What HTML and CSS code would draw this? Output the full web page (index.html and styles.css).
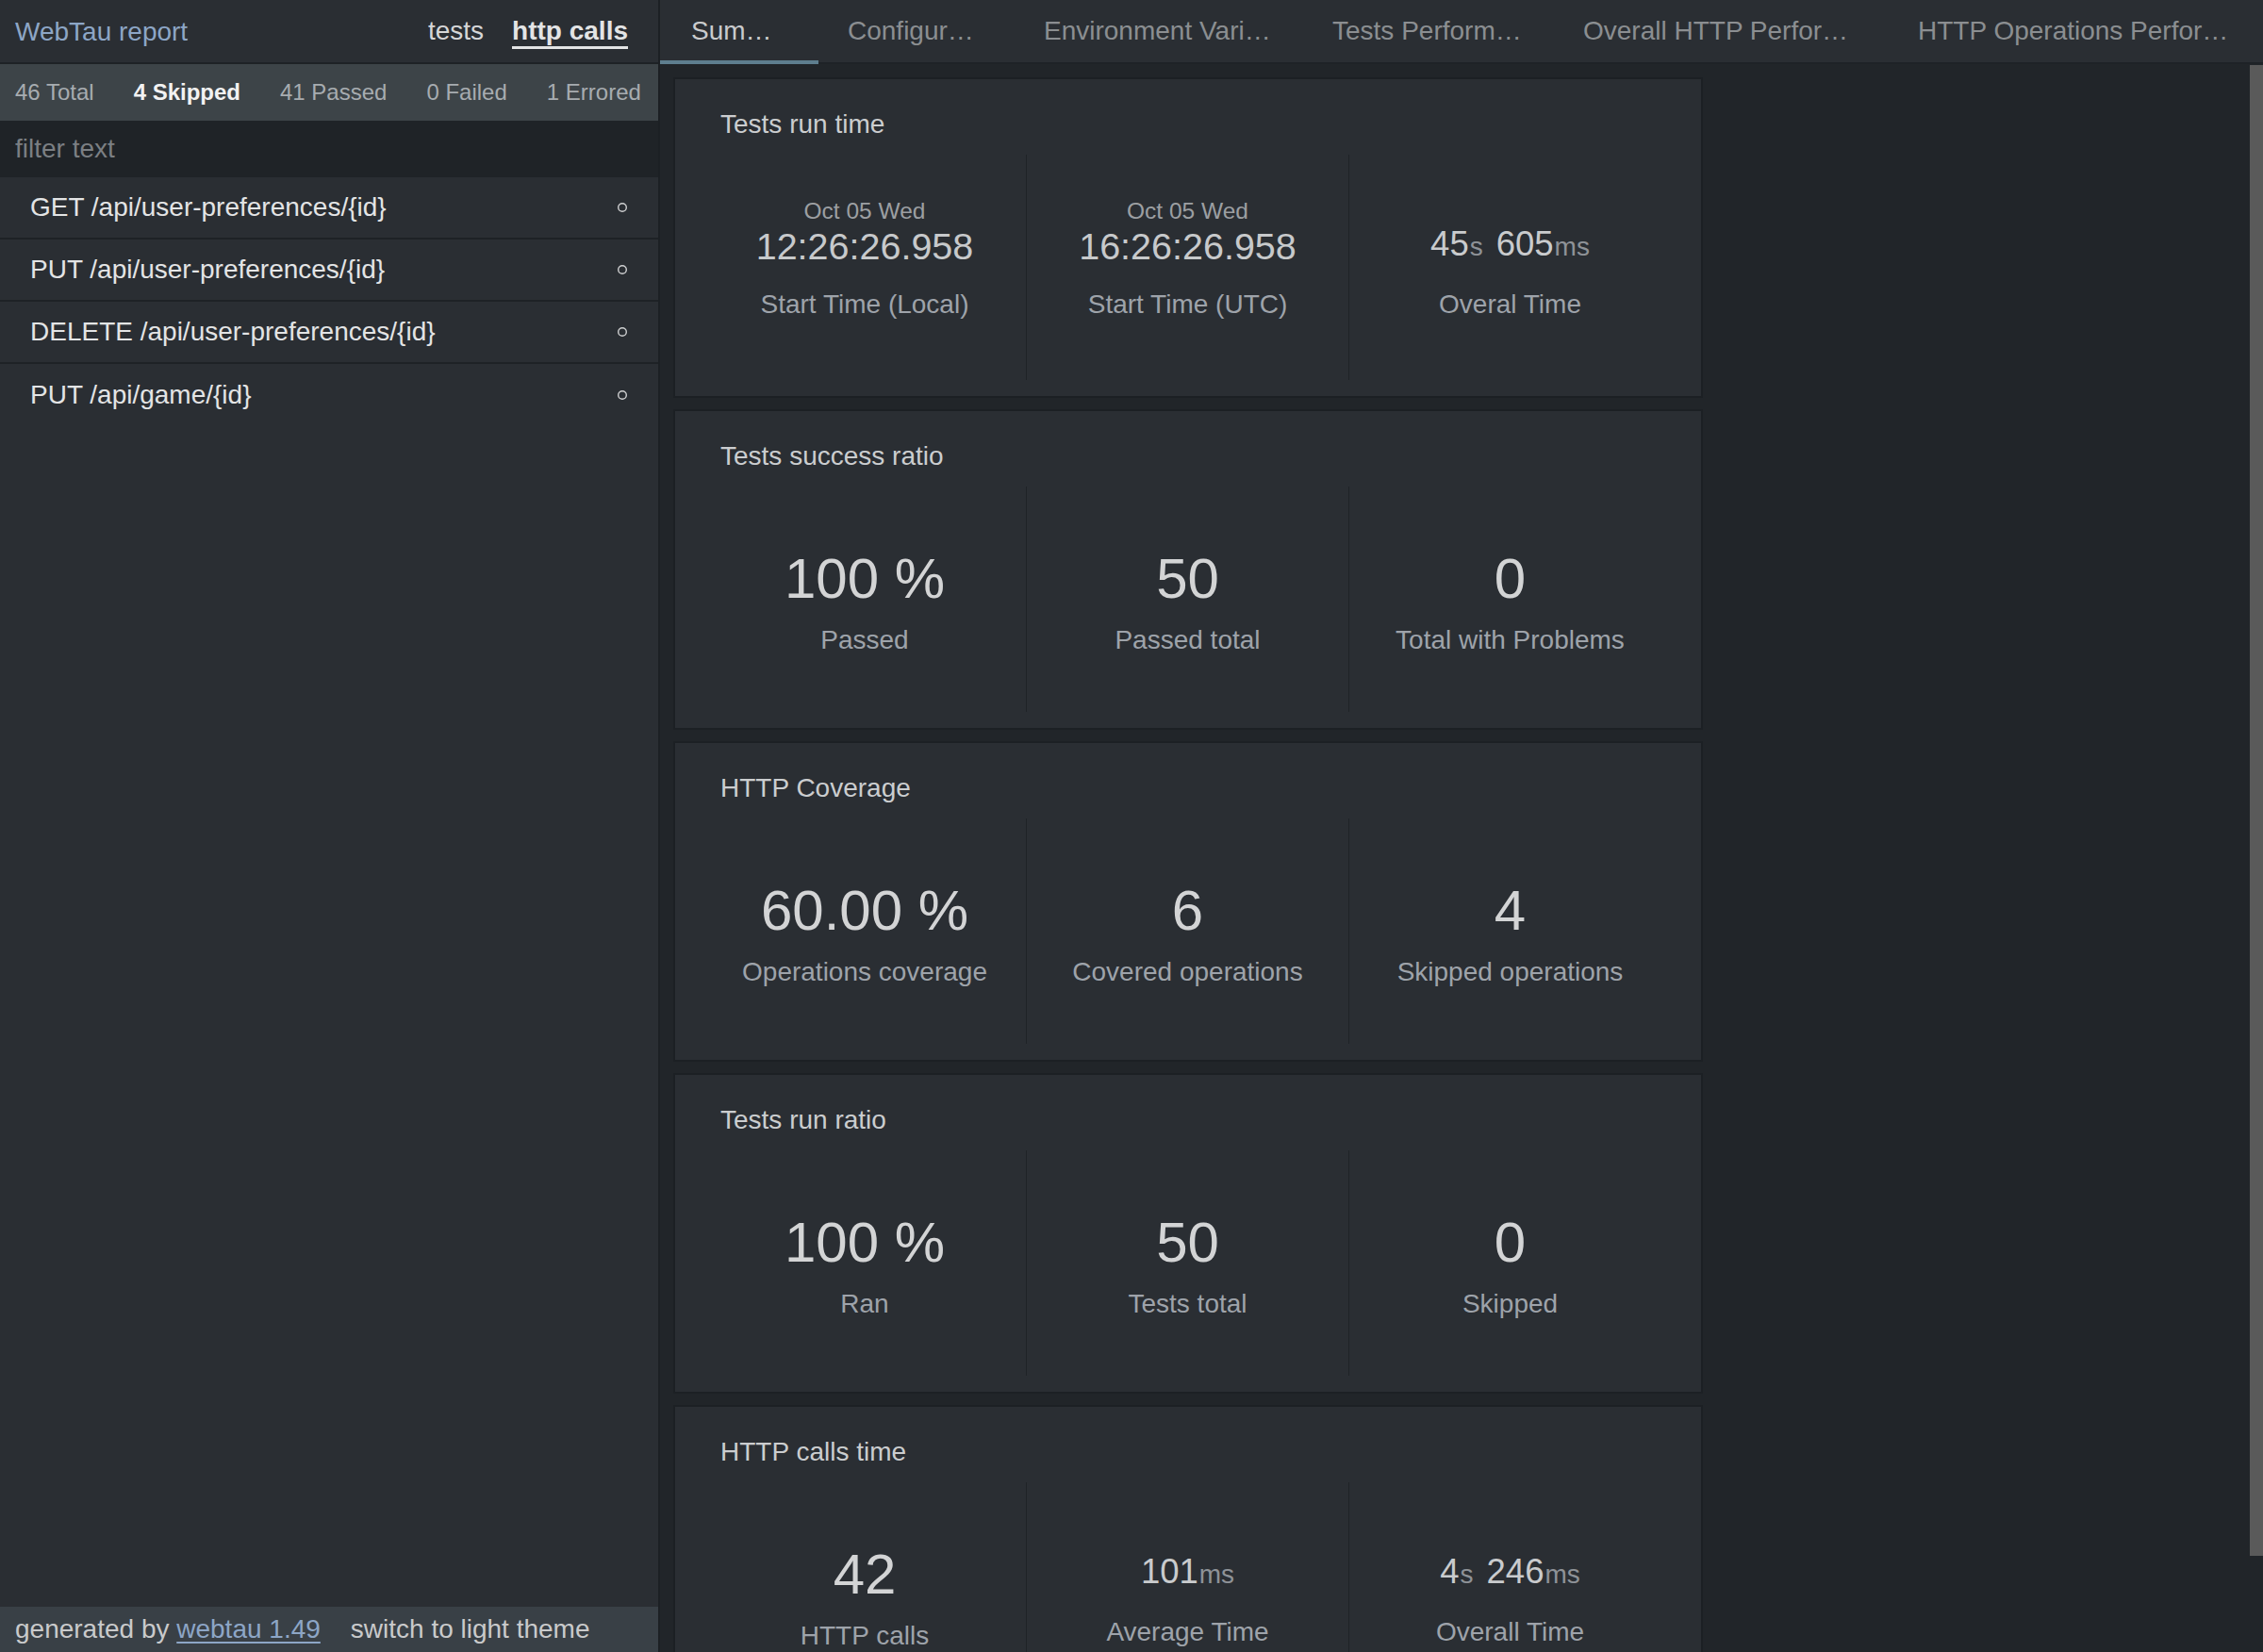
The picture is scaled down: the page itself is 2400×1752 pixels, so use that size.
FILE: index.html
```html
<!DOCTYPE html>
<html lang="en">
<head>
<meta charset="utf-8">
<title>WebTau report</title>
<link rel="stylesheet" href="styles.css">
</head>
<body>
<div class="app">
  <aside class="sidebar">
    <header class="side-header">
      <span class="brand">WebTau report</span>
      <nav class="mode-nav">
        <span class="mode">tests</span>
        <span class="mode mode-active">http calls</span>
      </nav>
    </header>
    <div class="status-bar">
      <span class="status">46 Total</span>
      <span class="status status-selected">4 Skipped</span>
      <span class="status">41 Passed</span>
      <span class="status">0 Failed</span>
      <span class="status">1 Errored</span>
    </div>
    <div class="filter">
      <input class="filter-input" type="text" placeholder="filter text">
    </div>
    <ul class="ops">
      <li class="op"><span class="op-label">GET /api/user-preferences/{id}</span><svg class="op-icon" width="12" height="12" viewBox="0 0 12 12"><circle cx="6" cy="6" r="4.3" fill="none" stroke="#cfd0d1" stroke-width="1.4"/></svg></li>
      <li class="op"><span class="op-label">PUT /api/user-preferences/{id}</span><svg class="op-icon" width="12" height="12" viewBox="0 0 12 12"><circle cx="6" cy="6" r="4.3" fill="none" stroke="#cfd0d1" stroke-width="1.4"/></svg></li>
      <li class="op"><span class="op-label">DELETE /api/user-preferences/{id}</span><svg class="op-icon" width="12" height="12" viewBox="0 0 12 12"><circle cx="6" cy="6" r="4.3" fill="none" stroke="#cfd0d1" stroke-width="1.4"/></svg></li>
      <li class="op"><span class="op-label">PUT /api/game/{id}</span><svg class="op-icon" width="12" height="12" viewBox="0 0 12 12"><circle cx="6" cy="6" r="4.3" fill="none" stroke="#cfd0d1" stroke-width="1.4"/></svg></li>
    </ul>
    <footer class="side-footer">
      <span>generated by <a class="footer-link" href="#">webtau 1.49</a></span>
      <span class="theme-switch">switch to light theme</span>
    </footer>
  </aside>

  <main class="main">
    <nav class="tabs">
      <span class="tab tab-summary tab-active">Sum…</span>
      <span class="tab tab-config">Configur…</span>
      <span class="tab tab-env">Environment Vari…</span>
      <span class="tab tab-perf">Tests Perform…</span>
      <span class="tab tab-http">Overall HTTP Perfor…</span>
      <span class="tab tab-ops">HTTP Operations Perfor…</span>
    </nav>
    <div class="body">
      <div class="content">
        <section class="card card-times">
          <h2 class="card-title">Tests run time</h2>
          <div class="metrics">
            <div class="metric">
              <div class="metric-value">
                <div class="date">Oct 05 Wed</div>
                <div class="time">12:26:26.958</div>
              </div>
              <div class="metric-label">Start Time (Local)</div>
            </div>
            <div class="metric">
              <div class="metric-value">
                <div class="date">Oct 05 Wed</div>
                <div class="time">16:26:26.958</div>
              </div>
              <div class="metric-label">Start Time (UTC)</div>
            </div>
            <div class="metric">
              <div class="metric-value">
                <div class="duration"><span class="num">45</span><span class="unit unit-gap">s</span><span class="num">605</span><span class="unit">ms</span></div>
              </div>
              <div class="metric-label">Overal Time</div>
            </div>
          </div>
        </section>

        <section class="card">
          <h2 class="card-title">Tests success ratio</h2>
          <div class="metrics">
            <div class="metric">
              <div class="metric-value"><div class="big">100 %</div></div>
              <div class="metric-label">Passed</div>
            </div>
            <div class="metric">
              <div class="metric-value"><div class="big">50</div></div>
              <div class="metric-label">Passed total</div>
            </div>
            <div class="metric">
              <div class="metric-value"><div class="big">0</div></div>
              <div class="metric-label">Total with Problems</div>
            </div>
          </div>
        </section>

        <section class="card">
          <h2 class="card-title">HTTP Coverage</h2>
          <div class="metrics">
            <div class="metric">
              <div class="metric-value"><div class="big">60.00 %</div></div>
              <div class="metric-label">Operations coverage</div>
            </div>
            <div class="metric">
              <div class="metric-value"><div class="big">6</div></div>
              <div class="metric-label">Covered operations</div>
            </div>
            <div class="metric">
              <div class="metric-value"><div class="big">4</div></div>
              <div class="metric-label">Skipped operations</div>
            </div>
          </div>
        </section>

        <section class="card">
          <h2 class="card-title">Tests run ratio</h2>
          <div class="metrics">
            <div class="metric">
              <div class="metric-value"><div class="big">100 %</div></div>
              <div class="metric-label">Ran</div>
            </div>
            <div class="metric">
              <div class="metric-value"><div class="big">50</div></div>
              <div class="metric-label">Tests total</div>
            </div>
            <div class="metric">
              <div class="metric-value"><div class="big">0</div></div>
              <div class="metric-label">Skipped</div>
            </div>
          </div>
        </section>

        <section class="card">
          <h2 class="card-title">HTTP calls time</h2>
          <div class="metrics">
            <div class="metric">
              <div class="metric-value"><div class="big">42</div></div>
              <div class="metric-label">HTTP calls</div>
            </div>
            <div class="metric">
              <div class="metric-value">
                <div class="duration"><span class="num">101</span><span class="unit">ms</span></div>
              </div>
              <div class="metric-label metric-label-up">Average Time</div>
            </div>
            <div class="metric">
              <div class="metric-value">
                <div class="duration"><span class="num">4</span><span class="unit unit-gap">s</span><span class="num">246</span><span class="unit">ms</span></div>
              </div>
              <div class="metric-label metric-label-up">Overall Time</div>
            </div>
          </div>
        </section>
      </div>
      <div class="scroll-track"><div class="scroll-thumb"></div></div>
    </div>
  </main>
</div>
</body>
</html>
```

FILE: styles.css
```css
* {
  box-sizing: border-box;
}

html, body {
  margin: 0;
  padding: 0;
  height: 100%;
  overflow: hidden;
  background: #212529;
  font-family: "Liberation Sans", Arial, Helvetica, sans-serif;
}

.app {
  display: flex;
  height: 100vh;
}

/* ---------- sidebar ---------- */
.sidebar {
  width: 700px;
  flex-shrink: 0;
  display: flex;
  flex-direction: column;
  background: #2a2e33;
  border-right: 2px solid #1c2024;
}

.side-header {
  height: 68px;
  display: flex;
  align-items: center;
  justify-content: space-between;
  padding: 2px 32px 0 16px;
  border-bottom: 2px solid #1e2226;
  background: #2a2e33;
  font-size: 28px;
}

.brand {
  color: #8da6c6;
}

.mode-nav {
  display: flex;
  gap: 30px;
  align-items: center;
}

.mode {
  color: #d6d7d8;
  line-height: 31px;
  border-bottom: 3px solid transparent;
  padding-bottom: 1px;
}

.mode-active {
  font-weight: bold;
  color: #e3e4e5;
  border-bottom-color: #e3e4e5;
}

.status-bar {
  height: 60px;
  display: flex;
  align-items: center;
  gap: 42px;
  padding-left: 16px;
  background: #3d4448;
  font-size: 24px;
  color: #a7acb0;
  white-space: nowrap;
}

.status-selected {
  font-weight: bold;
  color: #f2f2f2;
}

.filter {
  height: 60px;
  background: #1f2327;
  display: flex;
  align-items: center;
}

.filter-input {
  width: 100%;
  height: 100%;
  border: none;
  outline: none;
  background: transparent;
  padding: 0 16px;
  font-family: inherit;
  font-size: 28px;
  color: #d0d0d0;
}

.filter-input::placeholder {
  color: #7b7f83;
}

.ops {
  list-style: none;
  margin: 0;
  padding: 0;
  flex: 1;
}

.op {
  height: 66px;
  display: flex;
  align-items: center;
  justify-content: space-between;
  padding: 0 32px 0 32px;
  border-bottom: 2px solid #1e2226;
  font-size: 28px;
  color: #e3e4e5;
}

.op:last-child {
  border-bottom: none;
}

.op-icon {
  display: block;
  flex-shrink: 0;
}

.side-footer {
  height: 48px;
  display: flex;
  align-items: center;
  gap: 32px;
  padding-left: 16px;
  background: #394046;
  font-size: 28px;
  color: #c9cacb;
  white-space: nowrap;
}

.footer-link {
  color: #8da6c6;
  text-decoration: underline;
  text-underline-offset: 4px;
}

/* ---------- main ---------- */
.main {
  flex: 1;
  display: flex;
  flex-direction: column;
  min-width: 0;
}

.tabs {
  height: 68px;
  flex-shrink: 0;
  display: flex;
  background: #2a2e33;
  border-bottom: 2px solid #1e2226;
  font-size: 28px;
  white-space: nowrap;
}

.tab {
  height: 68px;
  padding: 2px 0 0 33px;
  display: flex;
  align-items: center;
  color: #8b8e91;
  border-bottom: 4px solid transparent;
  margin-bottom: -2px;
  flex-shrink: 0;
}

.tab-active {
  color: #c9cbcd;
  border-bottom-color: #5e7e8e;
}

.tab-summary { width: 168px; }
.tab-config { width: 206px; padding-left: 31px; }
.tab-env { width: 306px; }
.tab-perf { width: 266px; }
.tab-http { width: 355px; }
.tab-ops { flex: 1; }

.body {
  flex: 1;
  display: flex;
  min-height: 0;
  background: #212529;
}

.content {
  flex: 1;
  overflow: hidden;
  padding: 14px 0 0 14px;
  display: flex;
  flex-direction: column;
  gap: 12px;
}

.scroll-track {
  width: 14px;
  flex-shrink: 0;
  padding-top: 1px;
}

.scroll-thumb {
  height: 1581px;
  background: #5a5a5a;
}

/* ---------- cards ---------- */
.card {
  width: 1092px;
  height: 340px;
  flex-shrink: 0;
  background: #2a2e33;
  border: 2px solid #1c2024;
  padding: 32px 32px 0 30px;
}

.card-title {
  margin: 0;
  padding-left: 18px;
  font-size: 28px;
  line-height: 32px;
  font-weight: normal;
  color: #cbcdcf;
}

.metrics {
  margin-top: 16px;
  height: 239px;
  display: grid;
  grid-template-columns: 342px 342px 342px;
}

.metric {
  display: flex;
  flex-direction: column;
  align-items: center;
}

.metric + .metric {
  border-left: 1px solid #1f2327;
}

.metric-value {
  height: 134px;
  display: flex;
  flex-direction: column;
  justify-content: flex-end;
  align-items: center;
}

.big {
  font-size: 60px;
  line-height: 72px;
  color: #d3d4d5;
}

.date {
  font-size: 24.5px;
  line-height: 28px;
  margin-bottom: 2px;
  color: #9c9fa2;
}

.time {
  font-size: 39.5px;
  line-height: 42px;
  margin-bottom: 16px;
  color: #c7c9cb;
}

.duration {
  line-height: 40px;
  margin-bottom: 12px;
  white-space: nowrap;
}

.num {
  font-size: 36.5px;
  color: #c9cbcd;
}

.unit {
  font-size: 28px;
  color: #8e9297;
  margin-left: 1px;
}

.unit-gap {
  margin-right: 14px;
}

.metric-label {
  margin-top: 13px;
  font-size: 28px;
  line-height: 32px;
  color: #9ea3aa;
  white-space: nowrap;
}

.card-times .metric-label {
  margin-top: 9px;
}

.metric-label-up {
  margin-top: 9px;
}
```
